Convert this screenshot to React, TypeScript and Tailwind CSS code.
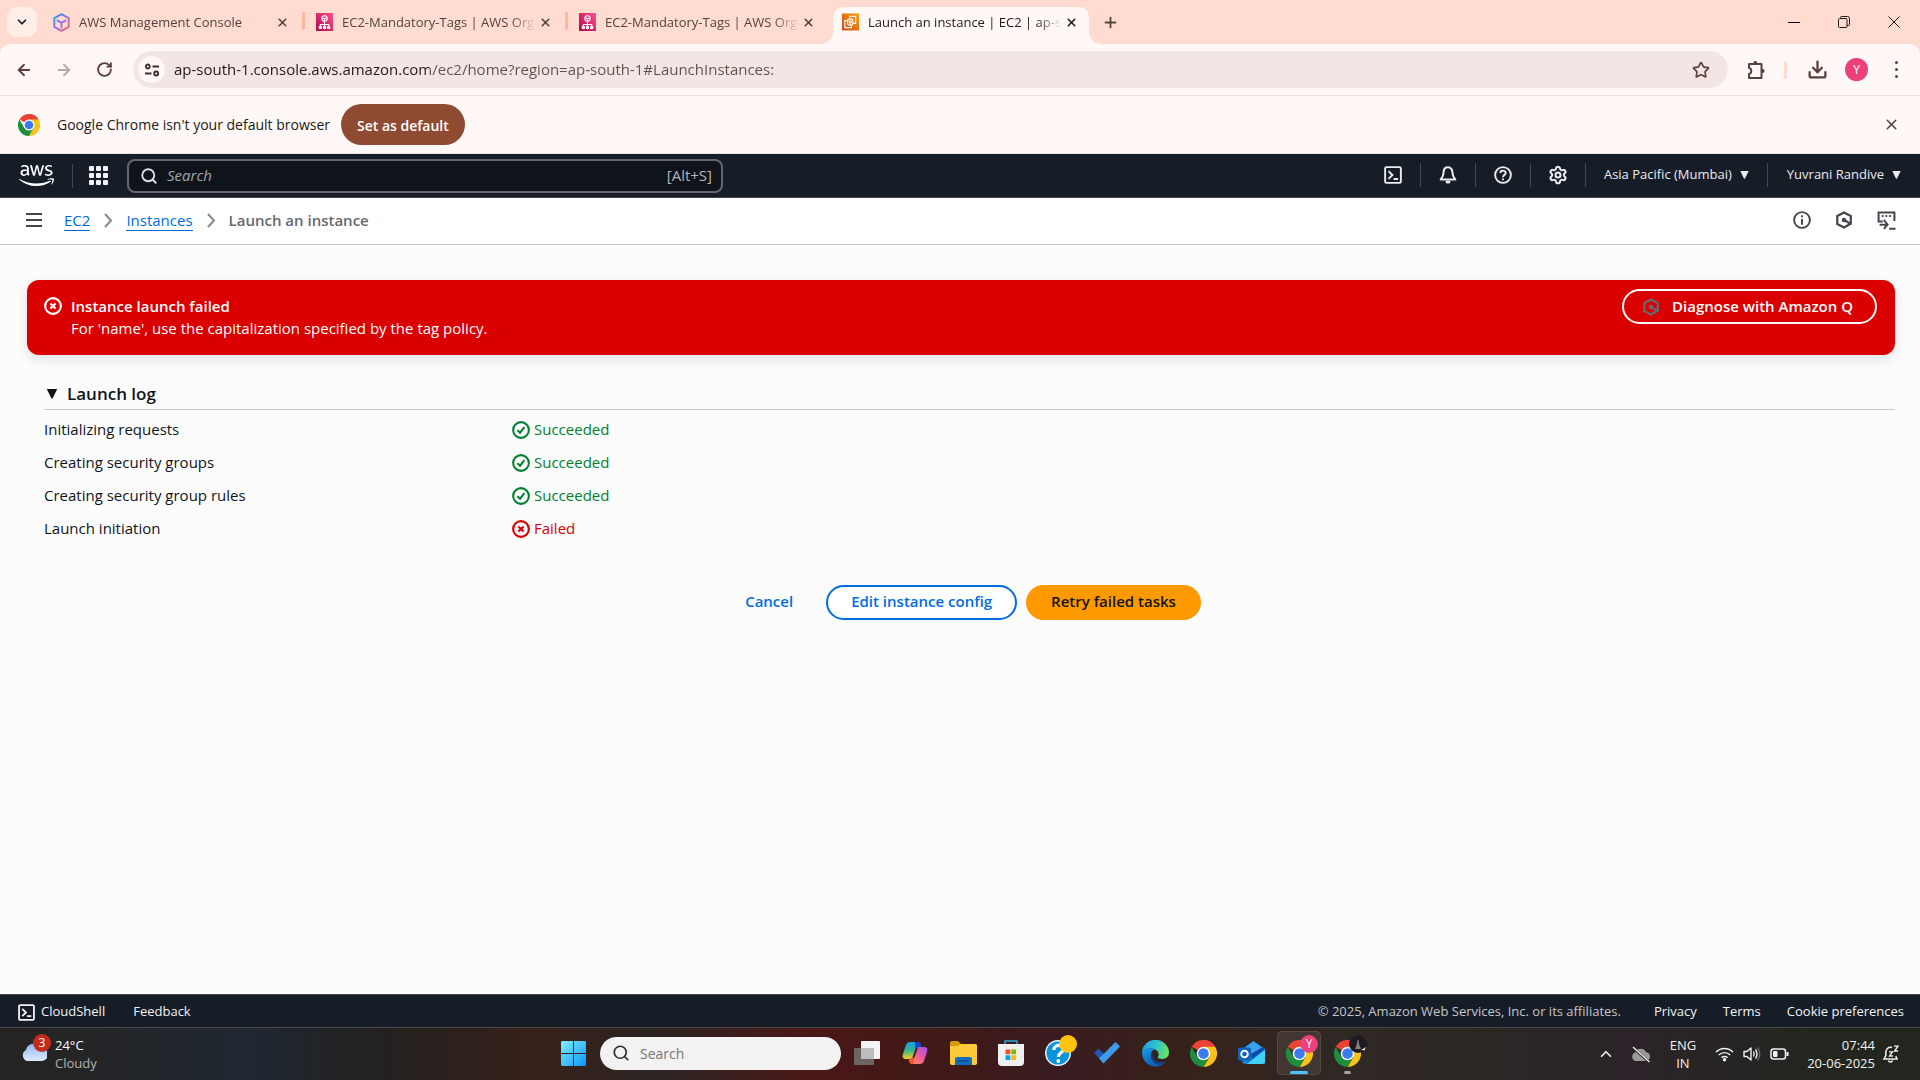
import type { ReactNode } from "react";
import { ArrowLeft, ArrowRight, ChevronDown, ChevronUp, Download, Plus, RotateCw, Search, Settings, Star, X } from "lucide-react";
import { FaAws } from "react-icons/fa";

/* ---------- browser icons ---------- */

function ChromeLogo({ className }: { className: string }) {
  return (
    <svg viewBox="0 0 48 48" className={className} aria-hidden="true">
      <path d="M24 24 3.2 12A24 24 0 0 1 44.8 12Z" fill="#ea4335" />
      <path d="M24 24 24 0A24 24 0 0 1 44.8 12L24 12Z" fill="#ea4335" />
      <path d="M24 12H44.8A24 24 0 0 1 24 48L34.4 30Z" fill="#fbc116" />
      <path d="M13.6 30 3.2 12A24 24 0 0 0 24 48L34.4 30Z" fill="#1e8e3e" />
      <circle cx="24" cy="24" r="12" fill="#fff" />
      <circle cx="24" cy="24" r="9.4" fill="#3a7bf0" />
    </svg>
  );
}

function ConsoleFavicon() {
  return (
    <svg viewBox="0 0 18 20" className="h-[19px] w-[17px]" fill="none" strokeWidth="2" strokeLinejoin="round">
      <defs>
        <linearGradient id="console-cube" x1="0" y1="0" x2="1" y2="1">
          <stop offset="0" stopColor="#12a4e8" />
          <stop offset="0.5" stopColor="#9a6cf5" />
          <stop offset="1" stopColor="#ff6a4d" />
        </linearGradient>
      </defs>
      <path d="M9 1.2 16.6 5.4V14.6L9 18.8 1.4 14.6V5.4ZM4 7.5 9 10.4 14 7.5M9 10.4V16" stroke="url(#console-cube)" />
    </svg>
  );
}

function OrgFavicon() {
  return (
    <svg viewBox="0 0 17 18" className="h-[18px] w-[17px]" fill="none" stroke="#fff" strokeWidth="1.1">
      <defs>
        <linearGradient id="org-bg" x1="0" y1="1" x2="1" y2="0">
          <stop offset="0" stopColor="#b0084d" />
          <stop offset="1" stopColor="#ff4f8b" />
        </linearGradient>
      </defs>
      <rect width="17" height="18" fill="url(#org-bg)" stroke="none" />
      <circle cx="8.500" cy="5.500" r="2.700" />
      <path d="M6.500 4.800 8.500 5.800 10.500 4.800M8.500 5.800V15M4.300 15V11.500H12.700V15" />
      <path d="M3.300 13.500V15.500H5.300V13.500ZM7.500 13.500V15.500H9.500V13.500ZM11.700 13.500V15.500H13.700V13.500Z" />
    </svg>
  );
}

function Ec2Favicon() {
  return (
    <svg viewBox="0 0 18 18" className="size-[18px]" fill="none" stroke="#fff" strokeWidth="1.200">
      <defs>
        <linearGradient id="ec2-bg" x1="0" y1="1" x2="1" y2="0">
          <stop offset="0" stopColor="#c8511b" />
          <stop offset="1" stopColor="#ff9900" />
        </linearGradient>
      </defs>
      <rect width="18" height="18" fill="url(#ec2-bg)" stroke="none" />
      <path d="M8 5.500V3H14.500V10.500H12M5.500 7.500H3V15H10V12.500" />
      <rect x="6" y="6" width="5.500" height="6" rx="1" />
      <circle cx="8.800" cy="9" r="1.200" />
    </svg>
  );
}

function SiteInfo() {
  return (
    <svg viewBox="0 0 16 16" className="size-4" fill="none" stroke="#3b2d29" strokeWidth="1.800">
      <circle cx="3.800" cy="4.500" r="2" />
      <path d="M8.500 4.500H15M1 11.500H7.500" />
      <circle cx="12.200" cy="11.500" r="2" />
    </svg>
  );
}

function Puzzle() {
  return (
    <svg viewBox="0 0 20 20" className="size-5" fill="none" stroke="#5b4039" strokeWidth="2" strokeLinejoin="round">
      <path d="M3 4H15.500V18H3V14C6 13.500 6 8.500 3 8Z" />
      <circle cx="9.300" cy="3" r="1.900" fill="#5b4039" stroke="none" />
      <circle cx="16.700" cy="11" r="1.900" fill="#5b4039" stroke="none" />
    </svg>
  );
}

/* ---------- console icons ---------- */

function ShellIcon({ className }: { className: string }) {
  return (
    <svg viewBox="0 0 16 16" className={className} fill="none" stroke="currentColor" strokeWidth="1.700">
      <rect x="1" y="1" width="14" height="14" rx="1.200" />
      <path d="M4 4.500 7.500 8 4 11.500M8.500 11.500H12.500" />
    </svg>
  );
}

function BellIcon() {
  return (
    <svg viewBox="0 0 16 16" className="size-[18px]" fill="none" stroke="currentColor" strokeWidth="1.800" strokeLinejoin="round">
      <path d="M8 1.200C5.400 1.200 4.100 3.200 4.100 5.600 4.100 8.800 3.200 10 1.500 12H14.500C12.800 10 11.900 8.800 11.900 5.600 11.900 3.200 10.600 1.200 8 1.200Z" />
      <path d="M5.800 13H10.200A2.200 2.600 0 0 1 5.800 13Z" fill="currentColor" stroke="none" />
    </svg>
  );
}

function HelpIcon() {
  return (
    <svg viewBox="0 0 16 16" className="size-[18px]" fill="none" stroke="currentColor" strokeWidth="1.700">
      <circle cx="8" cy="8" r="7" />
      <path d="M5.600 6.300C5.600 3.400 10.400 3.400 10.400 6.200 10.400 8 8 7.800 8 10" />
      <path d="M8 11V12.700" />
    </svg>
  );
}

function InfoIcon() {
  return (
    <svg viewBox="0 0 16 16" className="size-[18px]" fill="none" stroke="currentColor" strokeWidth="1.700">
      <circle cx="8" cy="8" r="7" />
      <path d="M8 3.800V5.600M8 7V12.200" />
    </svg>
  );
}

function AmazonQIcon() {
  return (
    <svg viewBox="0 0 16 16" className="size-[18px]" fill="none" stroke="currentColor" strokeWidth="2" strokeLinejoin="round">
      <path d="M13 11.800 8 14.700 2 11.500V4.500L8 1.300 14 4.500V11.500L8.500 8.300" />
      <circle cx="8" cy="8" r="2" fill="currentColor" stroke="none" />
    </svg>
  );
}

function DeployIcon() {
  return (
    <svg viewBox="0 0 18 18" className="size-[19px]" fill="none" stroke="currentColor" strokeWidth="1.900">
      <path d="M5.500 10H1.500V1.500H16.500V9.500" />
      <path d="M4.500 4.800H6.200M8 4.800H9.700M11.500 4.800H13.200" />
      <path d="M2.500 13H9.500M6.500 8.500 10 13 6.500 17M11.500 16.800H17.500" />
    </svg>
  );
}

function StatusOk() {
  return (
    <svg viewBox="0 0 16 16" className="size-[18px]" fill="none" stroke="currentColor" strokeWidth="1.800">
      <circle cx="8" cy="8" r="7" />
      <path d="M4.800 8.200 7.200 10.400 11 5.500" />
    </svg>
  );
}

function StatusError() {
  return (
    <svg viewBox="0 0 16 16" className="size-[18px]" fill="none" stroke="currentColor" strokeWidth="1.900">
      <circle cx="8" cy="8" r="7" />
      <path d="M5.700 5.700 10.300 10.300M10.300 5.700 5.700 10.300" />
    </svg>
  );
}

function Caret({ className }: { className: string }) {
  return (
    <svg viewBox="0 0 10 9" className={className} fill="currentColor">
      <path d="M0.300 0H9.700L5.600 8.300Q5 9 4.400 8.300Z" />
    </svg>
  );
}

function AppsGrid() {
  return (
    <span className="grid grid-cols-3 gap-[2px]">
      {[0, 1, 2, 3, 4, 5, 6, 7, 8].map((i) => (
        <span key={i} className="size-[5px] rounded-[1px] bg-[#f3f3f7]" />
      ))}
    </span>
  );
}

/* ---------- browser chrome ---------- */

function Tab({ icon, title, active, separator }: { icon: ReactNode; title: string; active?: boolean; separator?: boolean }) {
  return (
    <div className="flex items-end">
      <div className={active ? "relative flex h-[37px] w-[256px] items-center rounded-t-[10px] bg-[#fff8f6] px-[9px] pb-[7px] text-[#231917]" : "flex h-[37px] w-[256px] items-center px-[9px] pb-[7px] text-[#53433f]"}>
        {active && (
          <>
            <span className="absolute bottom-0 -left-3 size-3 bg-[radial-gradient(circle_at_0_0,transparent_12px,#fff8f6_12px)]" />
            <span className="absolute -right-3 bottom-0 size-3 bg-[radial-gradient(circle_at_100%_0,transparent_12px,#fff8f6_12px)]" />
          </>
        )}
        <span className="flex w-[17px] shrink-0 justify-center">{icon}</span>
        <span className="ml-[9px] min-w-0 flex-1 pt-[2px] text-[13px] whitespace-nowrap [mask-image:linear-gradient(90deg,#000_calc(100%-26px),transparent)]">{title}</span>
        <button aria-label="Close tab" className="flex size-[18px] items-center justify-center">
          <X size={13} strokeWidth={3} />
        </button>
      </div>
      <span className={separator ? "mx-[2px] mb-[14px] h-[18px] w-[3px] rounded bg-[#ffb59f]" : "w-[7px]"} />
    </div>
  );
}

function TabStrip() {
  return (
    <header className="flex h-11 items-end bg-[#ffdbd0]">
      <button aria-label="Search tabs" className="mr-[7px] mb-[7px] ml-[7px] flex size-[30px] items-center justify-center rounded-[10px] bg-[#ffede8] text-[#231917]">
        <ChevronDown size={14} strokeWidth={3} />
      </button>
      <nav aria-label="Tabs" className="flex">
        <Tab icon={<ConsoleFavicon />} title="AWS Management Console" separator />
        <Tab icon={<OrgFavicon />} title="EC2-Mandatory-Tags | AWS Org" separator />
        <Tab icon={<OrgFavicon />} title="EC2-Mandatory-Tags | AWS Org" />
        <Tab icon={<Ec2Favicon />} title="Launch an instance | EC2 | ap-so" active />
      </nav>
      <button aria-label="New tab" className="mb-3 ml-1 flex size-5 items-center justify-center text-[#53433f]">
        <Plus size={17} strokeWidth={2.5} />
      </button>
      <div className="mb-[14px] ml-auto flex items-center gap-[34px] pr-[18px] text-[#231917]">
        <button aria-label="Minimize" className="flex size-4 items-center justify-center">
          <span className="h-px w-3 bg-black" />
        </button>
        <button aria-label="Restore" className="flex size-4 items-center justify-center">
          <svg viewBox="0 0 12 12" className="size-3" fill="none" stroke="currentColor">
            <rect x="0.500" y="2.500" width="8.500" height="9" rx="1" />
            <path d="M2.500 2.500V1.500Q2.500 0.500 3.500 0.500H9.500Q11.500 0.500 11.500 2.500V8.500Q11.500 9.500 10.500 9.500H9" />
          </svg>
        </button>
        <button aria-label="Close window" className="flex size-4 items-center justify-center">
          <svg viewBox="0 0 12 12" className="size-3" stroke="currentColor">
            <path d="M0.500 0.500 11.500 11.500M11.500 0.500 0.500 11.500" />
          </svg>
        </button>
      </div>
    </header>
  );
}

function AddressBar() {
  return (
    <div className="bg-[#ffdbd0]">
      <div className="flex h-[52px] items-center rounded-t-[10px] border-b border-[#f0dfda] bg-[#fff8f6] px-[14px] text-[#5b4039]">
        <div className="flex w-[119px] items-center gap-5">
          <button aria-label="Back" className="flex size-5 items-center justify-center"><ArrowLeft size={18} strokeWidth={2.5} /></button>
          <button aria-label="Forward" className="flex size-5 items-center justify-center text-[#b8aaa6]"><ArrowRight size={18} strokeWidth={2.5} /></button>
          <button aria-label="Reload" className="flex size-5 items-center justify-center"><RotateCw size={17} strokeWidth={2.6} /></button>
        </div>
        <div className="flex h-[37px] flex-1 items-center rounded-full bg-[#f2e6e5] pr-[17px] pl-[5px]">
          <button aria-label="View site information" className="flex size-[27px] items-center justify-center rounded-full bg-[#fff8f6]"><SiteInfo /></button>
          <input
            aria-label="Address"
            className="ml-[9px] min-w-0 flex-1 bg-[linear-gradient(90deg,#231917_255px,#5f504c_255px)] bg-clip-text text-[15px] text-transparent outline-none"
            defaultValue="ap-south-1.console.aws.amazon.com/ec2/home?region=ap-south-1#LaunchInstances:"
          />
          <button aria-label="Bookmark this page" className="flex size-5 items-center justify-center"><Star size={18} strokeWidth={2.2} /></button>
        </div>
        <button aria-label="Extensions" className="ml-[18px] flex size-5 items-center justify-center"><Puzzle /></button>
        <span className="ml-[18px] h-[18px] w-[3px] rounded bg-[#ffdbd0]" />
        <button aria-label="Downloads" className="ml-[18px] flex size-6 items-center justify-center"><Download size={21} strokeWidth={2.6} /></button>
        <button aria-label="Profile" className="ml-4 flex size-[23px] items-center justify-center rounded-full bg-[#ec407a] text-[12px] text-white">Y</button>
        <button aria-label="Menu" className="ml-[18px] flex w-5 flex-col items-center gap-1">
          <span className="size-[3px] rounded-full bg-[#5b4039]" />
          <span className="size-[3px] rounded-full bg-[#5b4039]" />
          <span className="size-[3px] rounded-full bg-[#5b4039]" />
        </button>
      </div>
    </div>
  );
}

function DefaultBrowserBar() {
  return (
    <div className="flex h-[58px] items-center border-b border-[#f0dfda] bg-[#fff8f6] pr-[19px] pl-[18px] text-[#231917]">
      <ChromeLogo className="size-[22px]" />
      <p className="ml-[17px] w-[284px] text-[14px] whitespace-nowrap">Google Chrome isn&apos;t your default browser</p>
      <button className="h-[41px] rounded-full bg-[#8f4a32] px-4 pt-[2px] text-[14px] font-semibold text-white">Set as default</button>
      <button aria-label="Dismiss" className="ml-auto flex size-5 items-center justify-center text-[#53433f]"><X size={17} strokeWidth={2.2} /></button>
    </div>
  );
}

/* ---------- AWS console ---------- */

function NavItem({ children, label }: { children: ReactNode; label: string }) {
  return (
    <button aria-label={label} className="flex h-6 w-[55px] items-center justify-center border-r border-[#424650]">
      {children}
    </button>
  );
}

function ConsoleNav() {
  return (
    <nav aria-label="AWS console" className="flex h-11 items-center border-b border-[#424650] bg-[#161d26] text-[13px] text-[#ebebf0]">
      <a href="#home" aria-label="AWS home" className="flex h-6 w-[73px] items-center border-r border-[#424650] pl-[19px] text-white">
        <FaAws size={35} />
      </a>
      <button aria-label="Services" className="ml-4"><AppsGrid /></button>
      <label className="ml-[19px] flex h-[34px] w-[596px] items-center rounded-lg border-2 border-[#656871] bg-[#0f141a] pr-[9px] pl-[11px] text-[15px] text-[#b4b4bb]">
        <Search size={18} strokeWidth={2.5} className="text-[#dedee3]" />
        <input aria-label="Search" placeholder="Search" className="ml-[9px] min-w-0 flex-1 italic outline-none placeholder:text-[#a4a4ad]" />
        <span>[Alt+S]</span>
      </label>
      <div className="mb-[2px] ml-auto flex items-center">
        <NavItem label="CloudShell"><ShellIcon className="size-[18px]" /></NavItem>
        <NavItem label="Notifications"><BellIcon /></NavItem>
        <NavItem label="Support"><HelpIcon /></NavItem>
        <NavItem label="Settings"><Settings size={20} strokeWidth={2.4} /></NavItem>
        <button className="flex h-6 items-center gap-2 border-r border-[#424650] px-[18px]">Asia Pacific (Mumbai)<Caret className="h-2 w-[9px]" /></button>
        <button className="flex h-6 items-center gap-2 px-[19px]">Yuvrani Randive<Caret className="h-2 w-[9px]" /></button>
      </div>
    </nav>
  );
}

function CrumbArrow() {
  return (
    <svg viewBox="0 0 8 15" className="h-[15px] w-2" fill="none" stroke="#8c8c94" strokeWidth="2.200">
      <path d="M1 1 7 7.500 1 14" />
    </svg>
  );
}

function BreadcrumbBar() {
  return (
    <div className="flex h-[47px] items-center border-b border-[#c6c6cd] bg-white pr-6 pb-[2px] pl-[26px] text-[15px] text-[#424650]">
      <button aria-label="Open navigation" className="flex w-4 flex-col gap-1">
        <span className="h-[2px] bg-[#424650]" />
        <span className="h-[2px] bg-[#424650]" />
        <span className="h-[2px] bg-[#424650]" />
      </button>
      <nav aria-label="Breadcrumb" className="ml-[22px] flex items-center gap-[14px]">
        <a href="#ec2" className="border-b border-[#006ce0] leading-5 text-[#006ce0]">EC2</a>
        <CrumbArrow />
        <a href="#instances" className="border-b border-[#006ce0] leading-5 text-[#006ce0]">Instances</a>
        <CrumbArrow />
        <span className="leading-5 font-semibold text-[#656871]">Launch an instance</span>
      </nav>
      <div className="ml-auto flex items-center gap-6">
        <button aria-label="Info"><InfoIcon /></button>
        <button aria-label="Amazon Q"><AmazonQIcon /></button>
        <button aria-label="Deploy"><DeployIcon /></button>
      </div>
    </div>
  );
}

const LOG = [
  { step: "Initializing requests", ok: true },
  { step: "Creating security groups", ok: true },
  { step: "Creating security group rules", ok: true },
  { step: "Launch initiation", ok: false },
];

function LaunchPage() {
  return (
    <main className="flex-1 bg-[#fcfcfd] pt-[35px] pr-[25px] pl-[27px] text-[15px] text-[#0f141a]">
      <section role="alert" className="flex min-h-[75px] items-start gap-[9px] rounded-xl bg-[#db0000] py-[9px] pr-[18px] pl-[17px] text-white shadow-[0_4px_12px_rgba(0,20,40,0.12)]">
        <span className="pt-2"><StatusError /></span>
        <div className="flex-1 pt-[6px] leading-[22px]">
          <h2 className="font-semibold">Instance launch failed</h2>
          <p>For &apos;name&apos;, use the capitalization specified by the tag policy.</p>
        </div>
        <button className="flex h-[35px] items-center gap-3 rounded-full border-2 border-white pr-[22px] pl-[18px] font-semibold">
          <span className="text-[#656871]"><AmazonQIcon /></span>
          Diagnose with Amazon Q
        </button>
      </section>
      <section className="mt-[26px] pl-[17px]">
        <button className="flex h-[29px] w-full items-center gap-[9px] border-b border-[#c6c6cd] pb-[3px] pl-[2px] text-[17px] font-semibold">
          <Caret className="h-[10px] w-3" />
          Launch log
        </button>
        <table className="mt-[3px] w-full table-fixed border-collapse text-left">
          <tbody>
            {LOG.map((row) => (
              <tr key={row.step} className="h-[33px]">
                <th scope="row" className="w-[468px] font-normal">{row.step}</th>
                <td>
                  <span className={row.ok ? "flex items-center gap-1 text-[#00802f]" : "flex items-center gap-1 text-[#db0000]"}>
                    {row.ok ? <StatusOk /> : <StatusError />}
                    {row.ok ? "Succeeded" : "Failed"}
                  </span>
                </td>
              </tr>
            ))}
          </tbody>
        </table>
      </section>
      <div className="mt-10 flex justify-center gap-[9px] font-semibold">
        <button className="h-[35px] px-6 pb-[2px] text-[#006ce0]">Cancel</button>
        <button className="h-[35px] rounded-full border-2 border-[#006ce0] bg-white px-[23px] pb-[2px] text-[#006ce0]">Edit instance config</button>
        <button className="h-[35px] rounded-full bg-[#ff9900] px-[25px] pb-[2px] text-[#0f141a]">Retry failed tasks</button>
      </div>
    </main>
  );
}

function ConsoleFooter() {
  return (
    <footer className="flex h-[33px] items-center border-t border-[#424650] bg-[#161d26] pt-[2px] pr-4 pl-[18px] text-[13px] text-[#f3f3f7]">
      <button className="flex items-center gap-[6px]"><ShellIcon className="size-[17px]" />CloudShell</button>
      <button className="ml-7">Feedback</button>
      <p className="ml-auto text-[#c6c6cd]">© 2025, Amazon Web Services, Inc. or its affiliates.</p>
      <a href="#privacy" className="ml-[33px]">Privacy</a>
      <a href="#terms" className="ml-[26px]">Terms</a>
      <button className="ml-[26px]">Cookie preferences</button>
    </footer>
  );
}

/* ---------- taskbar ---------- */

function StartIcon() {
  return (
    <svg viewBox="0 0 25 25" className="size-[25px]">
      <defs>
        <linearGradient id="start-fill" gradientUnits="userSpaceOnUse" x1="0" y1="0" x2="25" y2="25">
          <stop offset="0" stopColor="#7df0ff" />
          <stop offset="1" stopColor="#0a95ff" />
        </linearGradient>
      </defs>
      <path d="M1 0H12V12H0V1ZM13 0H24L25 1V12H13ZM0 13H12V25H1L0 24ZM13 13H25V24L24 25H13Z" fill="url(#start-fill)" />
    </svg>
  );
}

function TaskViewIcon() {
  return (
    <svg viewBox="0 0 26 24" className="h-6 w-[26px]">
      <rect x="0" y="7" width="20" height="17" rx="1" fill="#6b6462" />
      <rect x="7" y="0" width="19" height="18" rx="1" fill="#f4f4f4" />
      <rect x="7" y="7" width="13" height="11" fill="#bdbdbd" />
    </svg>
  );
}

function CopilotIcon() {
  return (
    <svg viewBox="0 0 26 24" className="h-6 w-[26px]">
      <defs>
        <linearGradient id="cp-left" x1="0" y1="0" x2="0" y2="1">
          <stop offset="0" stopColor="#1a9cf0" />
          <stop offset="0.5" stopColor="#32b58c" />
          <stop offset="1" stopColor="#f5d020" />
        </linearGradient>
        <linearGradient id="cp-right" x1="1" y1="0" x2="0" y2="1">
          <stop offset="0" stopColor="#a24dea" />
          <stop offset="0.5" stopColor="#ec5c9a" />
          <stop offset="1" stopColor="#ff9a4a" />
        </linearGradient>
      </defs>
      <path d="M8 1H16C18.500 1 18.500 4 19.500 6.500H16C14 6.500 13.300 8 12.700 10L10.500 16.500C10 18 9 18 7 18H4C1 18 0 16 1 13L4 4C4.700 2 6 1 8 1Z" fill="url(#cp-left)" />
      <path d="M13 1H16C18.500 1 18.500 4 19.500 6.500H16C14.500 6.500 13.800 7.200 13.200 8.500Z" fill="#1544d8" />
      <path d="M18 23H10C7.500 23 7.500 20 6.500 17.500H10C12 17.500 12.700 16 13.300 14L15.500 7.500C16 6 17 6 19 6H22C25 6 26 8 25 11L22 20C21.300 22 20 23 18 23Z" fill="url(#cp-right)" />
      <path d="M7 17.500H10C11.500 17.500 12.200 17 12.800 15.600L11.500 23H10C7.800 23 7.800 20 7 17.500Z" fill="#f2552c" />
    </svg>
  );
}

function ExplorerIcon() {
  return (
    <svg viewBox="0 0 27 24" className="h-6 w-[27px]">
      <path d="M0 2Q0 0 2 0H8L11 3H25Q27 3 27 5V10H0Z" fill="#d99a08" />
      <path d="M0 5H8L11 3H25Q27 3 27 5V22Q27 24 25 24H2Q0 24 0 22Z" fill="#ffca3a" />
      <path d="M5 24V18Q5 16 7 16H20Q22 16 22 18V24Z" fill="#0f6cbd" />
      <path d="M8 20H19" stroke="#0b4f92" strokeWidth="1.500" />
    </svg>
  );
}

function StoreIcon() {
  return (
    <svg viewBox="0 0 26 26" className="size-[26px]">
      <path d="M7 5V1H19V5" fill="none" stroke="#2ba8e0" strokeWidth="1.500" />
      <path d="M0 4H26V22Q26 26 22 26H4Q0 26 0 22Z" fill="#f0f0f0" />
      <path d="M7.500 9.500H12.300V14.300H7.500Z" fill="#f25022" />
      <path d="M13.300 9.500H18.100V14.300H13.300Z" fill="#7fba00" />
      <path d="M7.500 15.300H12.300V20H7.500Z" fill="#00a4ef" />
      <path d="M13.300 15.300H18.100V20H13.300Z" fill="#ffb900" />
    </svg>
  );
}

function GetHelpIcon() {
  return (
    <svg viewBox="0 0 32 32" className="size-8">
      <circle cx="13" cy="18" r="12.300" fill="#0a95d8" stroke="#e9f4fb" strokeWidth="1.500" />
      <path d="M8.800 15C9 9 18 9 18 14.500 18 18 13.300 17.500 13.300 22" fill="none" stroke="#fff" strokeWidth="3.200" />
      <circle cx="13.300" cy="26" r="1.900" fill="#fff" />
      <circle cx="23" cy="9" r="9" fill="#ffc20e" />
    </svg>
  );
}

function TodoIcon() {
  return (
    <svg viewBox="0 0 26 22" className="h-[22px] w-[26px]">
      <path d="M0 11 4.500 6.500 14 16 9.500 20.500Z" fill="#2158b8" />
      <path d="M5 16.500 21.500 0 26 4.500 9.500 21.500Z" fill="#3f9bea" />
    </svg>
  );
}

function EdgeIcon() {
  return (
    <svg viewBox="0 0 27 27" className="size-[27px]">
      <defs>
        <linearGradient id="edge-top" x1="0" y1="0.300" x2="1" y2="0.500">
          <stop offset="0" stopColor="#1f9fe0" />
          <stop offset="0.500" stopColor="#2cc3d0" />
          <stop offset="1" stopColor="#6be35a" />
        </linearGradient>
        <linearGradient id="edge-low" x1="0" y1="0" x2="0.600" y2="1">
          <stop offset="0" stopColor="#1a9be6" />
          <stop offset="1" stopColor="#0a5bb5" />
        </linearGradient>
      </defs>
      <path d="M0 13A13.500 13 0 0 1 27 12.500C27 17 23.500 19 20 19 17 19 15.500 18 15.800 17 17.500 15 17 10.500 12 9 7 7.800 2 9 0 13Z" fill="url(#edge-top)" />
      <path d="M0 13C2 8 9 7 13 9.500 10 10 8.500 13 9 16 10 21 15 24 24 21.500A13.500 13.500 0 0 1 0 13Z" fill="url(#edge-low)" />
      <path d="M10 11.500C7.500 15 8.500 21 14 24 18 25.500 22 24 24.500 21 20 23.300 11.500 22 10.500 15.500Z" fill="#143f7a" />
    </svg>
  );
}

function OutlookIcon() {
  return (
    <svg viewBox="0 0 27 24" className="h-6 w-[27px]">
      <path d="M4 8 15.500 0 27 8V21Q27 23 25 23H8Q4 23 4 19Z" fill="#1587dd" />
      <path d="M8 6 15.500 0.500 24 6.500 14 14Z" fill="#3ba4ee" />
      <path d="M13 13 25.500 5.500 27 8 14 18Z" fill="#0c4aa8" />
      <path d="M27 9V21Q27 23 25 23H9L27 9Z" fill="#41d0f6" />
      <rect x="0" y="6.500" width="13" height="13" rx="1.500" fill="#0f63bd" />
      <circle cx="6.500" cy="13" r="3.300" fill="none" stroke="#fff" strokeWidth="1.900" />
    </svg>
  );
}

function TaskbarApp({ children, label }: { children: ReactNode; label: string }) {
  return <button aria-label={label} className="flex h-full w-12 items-center justify-center">{children}</button>;
}

function WeatherIcon() {
  return (
    <svg viewBox="0 0 26 18" className="h-[18px] w-[26px]">
      <defs>
        <linearGradient id="cloud-fill" x1="0" y1="0" x2="0" y2="1">
          <stop offset="0" stopColor="#8fb6f0" />
          <stop offset="1" stopColor="#dfeaff" />
        </linearGradient>
      </defs>
      <path d="M6 18A6 6 0 0 1 5 7 8 8 0 0 1 20 5 6.500 6.500 0 0 1 21 18Z" fill="url(#cloud-fill)" />
    </svg>
  );
}

function Taskbar() {
  return (
    <div className="grid h-[53px] grid-cols-[1fr_auto_1fr] items-center border-t border-[#4a4644] bg-[linear-gradient(90deg,#262421_0%,#1f2731_13%,#22211f_20%,#37201a_28%,#2b2422_34%,#4a1717_42%,#3f1a18_50%,#391b20_55%,#36221a_62%,#2f2824_70%,#2b2625_80%,#2b2329_85%,#23261f_95%)] text-[13px] text-white">
      <button className="relative flex h-full items-center pl-[21px] text-left">
        <span className="pb-1"><WeatherIcon /></span>
        <span className="absolute top-[6px] left-[33px] flex size-[18px] items-center justify-center rounded-full bg-[#c42b1c] text-[12px]">3</span>
        <span className="ml-2 leading-[18px]">24°C<br /><span className="text-[#b5b3b1]">Cloudy</span></span>
      </button>
      <div className="flex h-[52px] items-center pb-[2px]">
        <TaskbarApp label="Start"><StartIcon /></TaskbarApp>
        <label className="mr-[2px] ml-[3px] flex h-[33px] w-[241px] items-center rounded-full bg-[#f3f1f1] px-3 text-[14px] text-[#6b6b6b]">
          <Search size={18} strokeWidth={2.3} className="text-[#303030]" />
          <input aria-label="Search Windows" placeholder="Search" className="ml-[10px] min-w-0 flex-1 outline-none placeholder:text-[#777]" />
        </label>
        <TaskbarApp label="Task view"><TaskViewIcon /></TaskbarApp>
        <TaskbarApp label="Copilot"><CopilotIcon /></TaskbarApp>
        <TaskbarApp label="File Explorer"><ExplorerIcon /></TaskbarApp>
        <TaskbarApp label="Microsoft Store"><StoreIcon /></TaskbarApp>
        <TaskbarApp label="Get Help"><span className="mb-1 ml-1"><GetHelpIcon /></span></TaskbarApp>
        <TaskbarApp label="To Do"><TodoIcon /></TaskbarApp>
        <TaskbarApp label="Edge"><EdgeIcon /></TaskbarApp>
        <TaskbarApp label="Chrome"><ChromeLogo className="size-[27px]" /></TaskbarApp>
        <TaskbarApp label="Outlook"><OutlookIcon /></TaskbarApp>
        <button aria-label="Chrome, profile Y" className="relative mx-[2px] flex size-11 items-center justify-center rounded-[5px] border border-white/10 bg-white/8">
          <ChromeLogo className="size-[27px]" />
          <span className="absolute top-[3px] right-[2px] flex size-[18px] items-center justify-center rounded-full bg-[#ec407a] text-[12px]">Y</span>
          <span className="absolute bottom-0 h-[3px] w-[18px] rounded bg-[#4cc2ff]" />
        </button>
        <button aria-label="Chrome, second profile" className="relative mx-[2px] flex size-11 items-center justify-center">
          <ChromeLogo className="size-[27px]" />
          <svg viewBox="0 0 18 18" className="absolute top-1 right-[2px] size-[18px]">
            <circle cx="9" cy="9" r="9" fill="#1d1a22" />
            <path d="M8.500 5H9.500L10.300 10 12 14 6 14 7.700 10Z" fill="#8d7f80" />
            <path d="M12 15 17 12 15.500 15.500Z" fill="#ddd" />
          </svg>
          <span className="absolute bottom-[1px] h-[3px] w-[7px] rounded bg-[#a5a19e]" />
        </button>
      </div>
      <div className="flex items-center justify-end pr-[21px] text-[#f1f1f1]">
        <button aria-label="Show hidden icons"><ChevronUp size={18} strokeWidth={2.2} /></button>
        <button aria-label="OneDrive" className="ml-4">
          <svg viewBox="0 0 20 17" className="h-[17px] w-5">
            <path d="M4.500 15A4.500 4.500 0 0 1 4 6.500 6 6 0 0 1 15 6 4.700 4.700 0 0 1 16 15Z" fill="#999" />
            <path d="M1.500 1 18.500 16.500" stroke="#2b2625" strokeWidth="2.500" />
            <path d="M2 1 18.500 16" stroke="#eee" strokeWidth="1.300" />
          </svg>
        </button>
        <button className="ml-[19px] text-center leading-[18px]">ENG<br />IN</button>
        <button aria-label="Network, sound and battery" className="ml-[19px] flex items-center gap-[9px]">
          <svg viewBox="0 0 20 16" className="h-4 w-[19px]" fill="none" stroke="currentColor" strokeWidth="1.500">
            <path d="M1 6A12.500 12.500 0 0 1 19 6M4 9A8.500 8.500 0 0 1 16 9M6.800 12A4.500 4.500 0 0 1 13.200 12" />
            <circle cx="10" cy="14" r="1.800" fill="currentColor" stroke="none" />
          </svg>
          <svg viewBox="0 0 18 16" className="h-4 w-[18px]" fill="none" stroke="currentColor" strokeWidth="1.400" strokeLinejoin="round">
            <path d="M1 5.500H4L8 2V14L4 10.500H1ZM10.500 5.500Q12 8 10.500 10.500M12.500 3.500Q15.500 8 12.500 12.500" />
            <path d="M14.500 1.500Q19 8 14.500 14.500" stroke="#6b6766" />
          </svg>
          <svg viewBox="0 0 19 12" className="h-3 w-[19px]" fill="none" stroke="currentColor" strokeWidth="1.500">
            <rect x="1" y="1" width="14.500" height="10" rx="2.500" />
            <rect x="3" y="3" width="4.500" height="6" rx="1" fill="currentColor" stroke="none" />
            <path d="M17.500 4V8" strokeWidth="2" />
          </svg>
        </button>
        <button className="ml-[18px] text-right leading-[18px]">07:44<br />20-06-2025</button>
        <button aria-label="Notifications" className="ml-2">
          <svg viewBox="0 0 16 18" className="h-[18px] w-4" fill="none" stroke="currentColor" strokeWidth="1.500">
            <path d="M9 2.500C5 1.500 2.800 4.500 2.800 7.500V10.500L1 14H14L12.800 11M5.500 15.500C6 17.500 9 17.500 9.500 15.500" />
            <path d="M11 1.200H15L11.500 6H15M6 6.800H9.500L6.500 11H9.800" strokeWidth="1.300" />
          </svg>
        </button>
      </div>
    </div>
  );
}

export default function App() {
  return (
    <div className="flex min-h-screen flex-col font-['Open_Sans','Noto_Sans',sans-serif] leading-normal">
      <TabStrip />
      <AddressBar />
      <DefaultBrowserBar />
      <ConsoleNav />
      <BreadcrumbBar />
      <LaunchPage />
      <ConsoleFooter />
      <Taskbar />
    </div>
  );
}
